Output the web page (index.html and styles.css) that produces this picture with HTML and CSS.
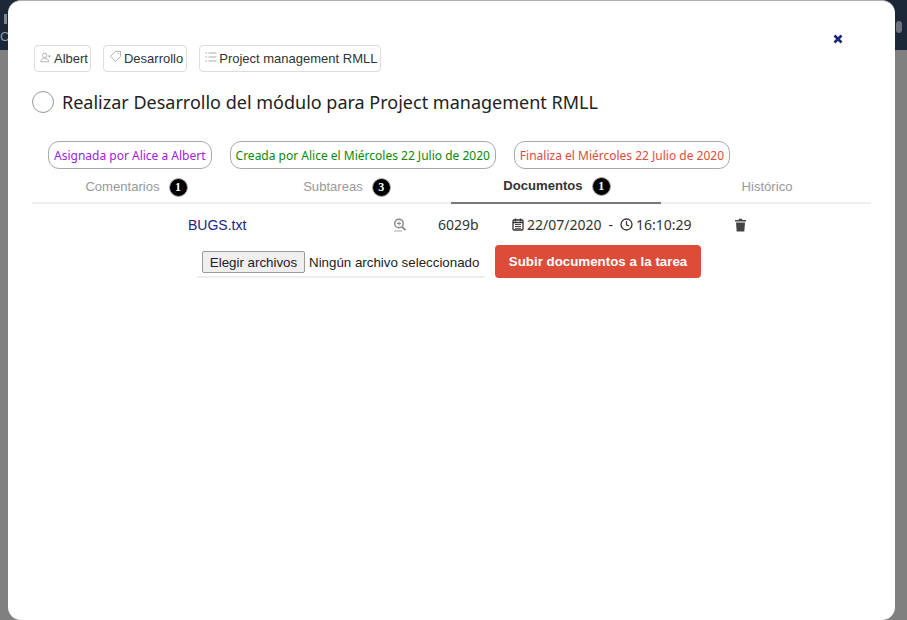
FILE: index.html
```html
<!DOCTYPE html>
<html lang="es">
<head>
<meta charset="utf-8">
<title>Tarea</title>
<link rel="stylesheet" href="styles.css">
</head>
<body>
<header class="topbar"><span class="bar-mark"></span><span class="bar-c">C</span><span class="bar-gear"></span></header>
<div class="modal">
  <button class="close" aria-label="Cerrar"><svg viewBox="0 0 10 10" width="10" height="10"><path d="M1.5 1.5l7 7M8.5 1.5l-7 7" stroke="#1a237e" stroke-width="2.6" fill="none"/></svg></button>
  <div class="tags">
    <span class="tag tag-user"><svg class="tag-ico" viewBox="0 0 14 12" width="12" height="11"><circle cx="5.5" cy="3.5" r="2.6" fill="none" stroke="#aaa"/><path d="M1 11c0-3 2-4 4.500-4s4.500 1 4.500 4z" fill="none" stroke="#aaa"/><path d="M11 3v3M9.500 4.500h3" stroke="#aaa"/></svg>Albert</span>
    <span class="tag"><svg class="tag-ico tag-up" viewBox="0 0 14 14" width="13" height="13"><path d="M1.500 7L7 1.500h5.500V7L7 12.500z" fill="none" stroke="#aaa" stroke-linejoin="round"/><circle cx="10" cy="4" r=".8" fill="#aaa"/></svg>Desarrollo</span>
    <span class="tag"><svg class="tag-ico tag-up" viewBox="0 0 12 12" width="12" height="12"><path d="M3.500 2h8M3.500 6h8M3.500 10h8" stroke="#aaa"/><path d="M.5 2h1.500M.5 6h1.500M.5 10h1.500" stroke="#aaa"/></svg>Project management RMLL</span>
  </div>
  <div class="title-row">
    <span class="check"></span>
    <h1 class="title">Realizar Desarrollo del módulo para Project management RMLL</h1>
  </div>
  <div class="pills">
    <span class="pill purple">Asignada por Alice a Albert</span>
    <span class="pill green">Creada por Alice el Miércoles 22 Julio de 2020</span>
    <span class="pill red">Finaliza el Miércoles 22 Julio de 2020</span>
  </div>
  <nav class="tabs">
    <a class="tab">Comentarios <span class="badge">1</span></a>
    <a class="tab">Subtareas <span class="badge">3</span></a>
    <a class="tab active">Documentos <span class="badge">1</span></a>
    <a class="tab">Histórico</a>
  </nav>
  <div class="doc-row">
    <a class="doc-name">BUGS.txt</a>
    <svg class="zoom-ico" viewBox="0 0 14 14" width="14" height="14"><circle cx="6" cy="5.500" r="4.300" fill="none" stroke="#888" stroke-width="1.400"/><path d="M9 8.800l3.500 3.300" stroke="#888" stroke-width="1.800"/><path d="M4 5.500h4M6 3.500v4" stroke="#888"/><path d="M1 13h8" stroke="#aaa"/></svg>
    <span class="doc-size">6029b</span>
    <span class="doc-date"><svg class="date-ico" viewBox="0 0 12 13" width="12" height="13"><rect x="1" y="2" width="10" height="10" rx="1" fill="none" stroke="#333" stroke-width="1.300"/><path d="M1 4.500h10" stroke="#333" stroke-width="1.500"/><path d="M3.500 .5v3M8.500 .5v3" stroke="#333" stroke-width="1.300"/><path d="M3 6.500h6M3 8.500h6M3 10.300h6" stroke="#333" stroke-width=".9"/></svg>22/07/2020</span>
    <span class="doc-sep">-</span>
    <span class="doc-date"><svg class="date-ico" viewBox="0 0 13 13" width="13" height="13"><circle cx="6.500" cy="6.500" r="5.500" fill="none" stroke="#333" stroke-width="1.300"/><path d="M6.500 3v3.800l2.500 1.200" fill="none" stroke="#333" stroke-width="1.200"/></svg>16:10:29</span>
    <svg class="trash-ico" viewBox="0 0 12 14" width="13" height="14"><path d="M0.500 2h11v1.500H.5zM4 2l.7-1.300h2.600L8 2z" fill="#444"/><path d="M1.500 4.500h9l-.7 9H2.200z" fill="#444"/></svg>
  </div>
  <form class="upload">
    <div class="file-field"><button type="button" class="file-btn">Elegir archivos</button><span class="file-none">Ningún archivo seleccionado</span></div>
    <button type="button" class="submit">Subir documentos a la tarea</button>
  </form>
</div>
</body>
</html>
```
FILE: styles.css
```css
* { box-sizing: border-box; }
html, body { margin: 0; height: 100%; }
body {
  height: 620px;
  overflow: hidden;
  background: #808080;
  font-family: "Liberation Sans", Arial, sans-serif;
  color: #333;
}
.topbar {
  position: relative;
  height: 50px;
  background: #1c2838;
  color: #8f98a3;
  font-size: 13px;
  line-height: 16px;
}
.bar-mark {
  position: absolute;
  left: 4px;
  top: 14px;
  width: 3px;
  height: 10px;
  background: #7d8792;
}
.bar-c { position: absolute; left: 0; top: 29px; }
.bar-gear {
  position: absolute;
  right: 5px;
  top: 21px;
  width: 6px;
  height: 12px;
  border-radius: 3px;
  background: #69727d;
}
.modal {
  position: absolute;
  left: 8px;
  top: 0;
  width: 887px;
  height: 620px;
  background: #fff;
  border-top: 1px solid #b0b0b0;
  border-radius: 13px;
  padding: 44px 24px 0 24px;
}
.close {
  position: absolute;
  top: 33px;
  right: 52px;
  width: 10px;
  height: 10px;
  padding: 0;
  border: 0;
  background: none;
  display: flex;
}
.tags { display: flex; gap: 12px; padding-left: 2px; }
.tag {
  display: flex;
  align-items: center;
  height: 27px;
  padding: 0 3px 0 5px;
  border: 1px solid #ddd;
  border-radius: 4px;
  font-size: 13px;
  color: #333;
  white-space: nowrap;
}
.tag-user { padding-right: 2px; }
.tag-ico { flex: none; margin-right: 2px; margin-top: -3px; }
.tag-up { margin-top: -4px; }
.title-row { display: flex; align-items: center; margin-top: 18px; height: 24px; }
.check {
  width: 22px;
  height: 22px;
  border: 1px solid #999;
  border-radius: 50%;
  flex: none;
}
.title {
  margin: 0 0 0 8px;
  font-family: "Noto Sans", sans-serif;
  font-weight: 400;
  font-size: 18px;
  line-height: 24px;
  color: #222;
  white-space: nowrap;
}
.pills { display: flex; gap: 18px; margin-top: 27px; padding-left: 16px; }
.pill {
  height: 28px;
  padding: 0 5px;
  display: flex;
  align-items: center;
  border: 1px solid #aaa;
  border-radius: 11px;
  font-family: "Noto Sans", sans-serif;
  font-size: 12px;
  white-space: nowrap;
}
.purple { color: #a020e0; }
.green { color: #0a8a0a; }
.red { color: #e04b40; }
.tabs {
  display: grid;
  grid-template-columns: 209px 210px 210px 210px;
  margin-top: 1px;
  height: 34px;
  border-bottom: 2px solid #eee;
}
.tab {
  display: flex;
  align-items: center;
  justify-content: center;
  gap: 9px;
  height: 34px;
  font-size: 13.100px;
  color: #999;
  padding-bottom: 2px;
}
.tab + .tab { padding-left: 2px; }
.tab.active { color: #333; font-weight: 700; border-bottom: 2px solid #777; }
.badge {
  width: 19px;
  height: 19px;
  margin-top: 2px;
  border-radius: 50%;
  background: #000;
  border: 1px solid #aaa;
  color: #fff;
  font-family: "Liberation Serif", serif;
  font-size: 12px;
  font-weight: 700;
  display: flex;
  align-items: center;
  justify-content: center;
}
.doc-row {
  display: flex;
  align-items: center;
  height: 41px;
  padding-left: 156px;
  font-family: "Noto Sans", sans-serif;
  font-size: 14px;
  color: #333;
}
.doc-name { font-family: "Liberation Sans", sans-serif; font-size: 14px; color: #1a237e; width: 205px; }
.zoom-ico { flex: none; }
.doc-size { margin-left: 31px; width: 74px; }
.doc-date { display: flex; align-items: center; gap: 3px; }
.doc-sep { margin: 0 7px 0 7px; }
.trash-ico { margin-left: 42px; flex: none; }
.upload { display: flex; align-items: flex-start; gap: 10px; padding-left: 165px; }
.file-field {
  width: 288px;
  height: 33px;
  display: flex;
  align-items: center;
  gap: 4px;
  padding: 3px 0 0 5px;
  border-bottom: 2px solid #eee;
  white-space: nowrap;
}
.file-btn {
  width: 103px;
  height: 22px;
  padding: 0;
  background: #efefef;
  border: 1px solid #9a9a9a;
  border-radius: 2px;
  font-family: "Liberation Sans", sans-serif;
  font-size: 13.333px;
  color: #222;
}
.file-none { font-size: 13.333px; color: #222; }
.submit {
  width: 206px;
  height: 33px;
  padding: 0;
  border: 0;
  border-radius: 4px;
  background: #dd4b39;
  color: #fff;
  font-family: "Liberation Sans", sans-serif;
  font-size: 13.333px;
  font-weight: 700;
}
```
